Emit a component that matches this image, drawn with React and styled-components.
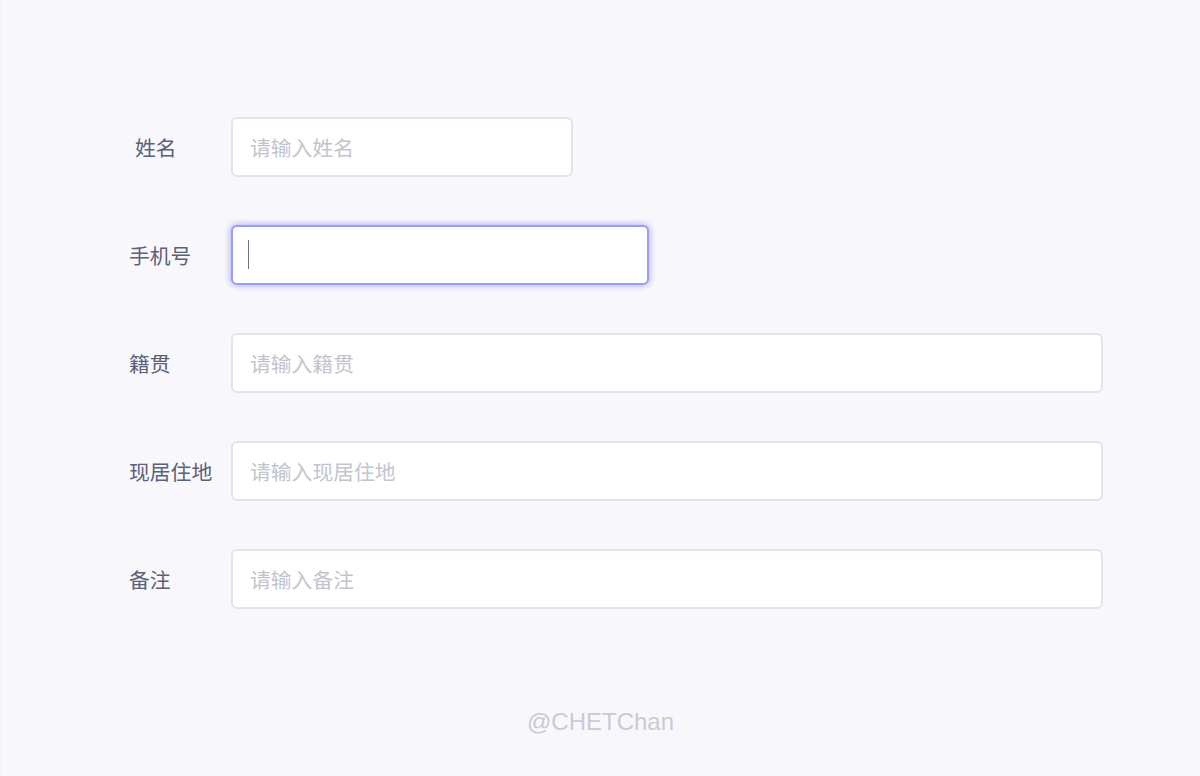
import React from 'react';
import styled, { createGlobalStyle } from 'styled-components';

const GlobalStyle = createGlobalStyle`
  html, body {
    margin: 0;
    padding: 0;
    background: #f8f8fc;
  }
  body {
    font-family: "Noto Sans CJK SC", "Noto Sans", sans-serif;
  }
`;

const Page = styled.div`
  min-height: 776px;
  box-sizing: border-box;
  padding: 117px 0 0 128px;
  display: flex;
  flex-direction: column;
  border-left: 1px solid #f1f1f6;
`;

const Form = styled.form`
  display: flex;
  flex-direction: column;
  gap: 48px;
`;

const Row = styled.div`
  display: flex;
  align-items: center;
  height: 60px;
`;

const Label = styled.label`
  width: 102px;
  box-sizing: border-box;
  padding-left: ${(p) => p.indent || 0}px;
  font-size: 20.8px;
  color: #5d607a;
  white-space: nowrap;
`;

const FieldWrap = styled.div`
  position: relative;
  width: ${(p) => p.width}px;
  height: 60px;
`;

const Input = styled.input`
  width: 100%;
  height: 100%;
  box-sizing: border-box;
  padding: 0 17px;
  border-radius: 6px;
  border: 2px solid ${(p) => (p.focused ? '#9b9cf2' : '#e3e3ea')};
  box-shadow: ${(p) => (p.focused ? '0 0 6px 1px rgba(130, 130, 240, 0.6)' : 'none')};
  background: #ffffff;
  font-family: "Noto Sans CJK SC", "Noto Sans", sans-serif;
  font-size: 20.8px;
  color: #5d607a;
  outline: none;
  caret-color: transparent;

  &::placeholder {
    color: #c3c4cf;
  }
`;

const Caret = styled.span`
  position: absolute;
  left: 17px;
  top: 15px;
  width: 1px;
  height: 29px;
  background: #6f7080;
`;

const Credit = styled.div`
  margin-top: 99px;
  margin-left: -128px;
  text-align: center;
  font-family: "Liberation Sans", Arial, sans-serif;
  font-size: 24px;
  color: #c9cad5;
`;

const fields = [
  { label: '姓名', placeholder: '请输入姓名', width: 342, indent: 6 },
  { label: '手机号', placeholder: '', width: 418, focused: true },
  { label: '籍贯', placeholder: '请输入籍贯', width: 872 },
  { label: '现居住地', placeholder: '请输入现居住地', width: 872 },
  { label: '备注', placeholder: '请输入备注', width: 872 },
];

export default function App() {
  return (
    <>
      <GlobalStyle />
      <Page>
        <Form onSubmit={(e) => e.preventDefault()}>
          {fields.map((f) => (
            <Row key={f.label}>
              <Label indent={f.indent}>{f.label}</Label>
              <FieldWrap width={f.width}>
                <Input placeholder={f.placeholder} focused={f.focused} readOnly />
                {f.focused && <Caret />}
              </FieldWrap>
            </Row>
          ))}
        </Form>
        <Credit>@CHETChan</Credit>
      </Page>
    </>
  );
}
